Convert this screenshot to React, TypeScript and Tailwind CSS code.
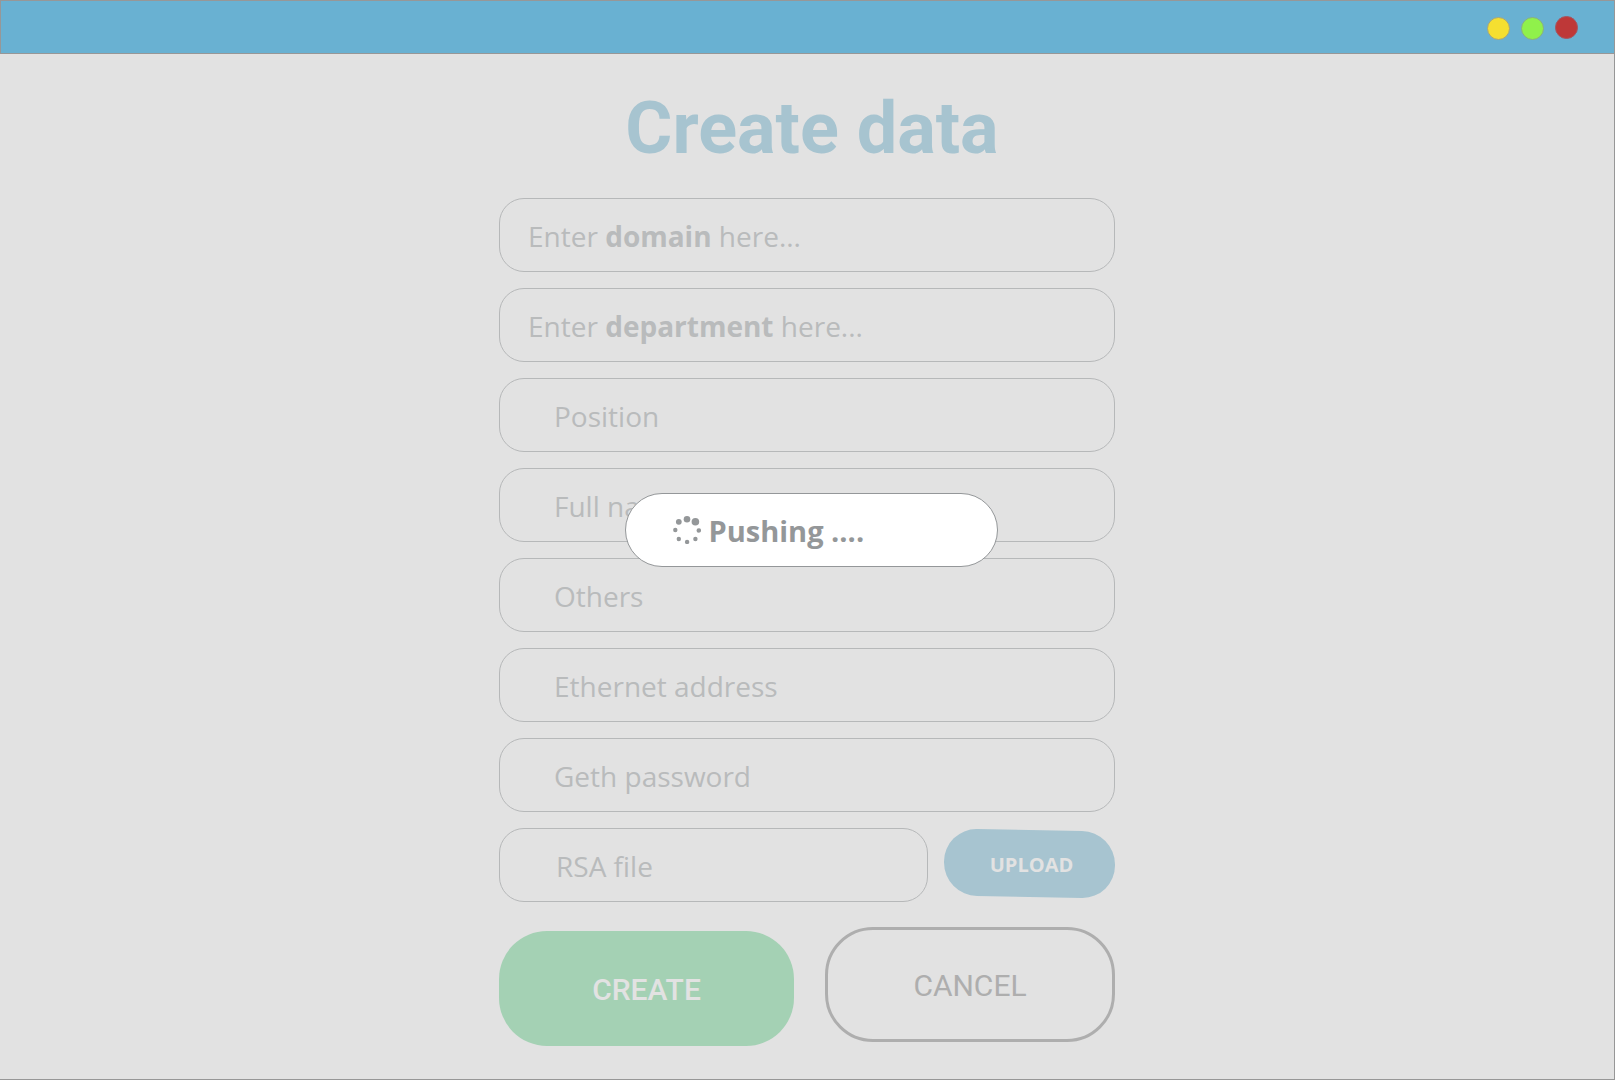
import { useState, type ReactNode } from "react";

type FieldProps = {
  id: string;
  hint: ReactNode;
  indent: string;
  type?: string;
  className?: string;
};

function Field({ id, hint, indent, type = "text", className = "" }: FieldProps) {
  const [value, setValue] = useState("");
  return (
    <div className={`relative h-[74px] ${className}`}>
      <input
        id={id}
        type={type}
        value={value}
        onChange={(e) => setValue(e.target.value)}
        className={`h-full w-full rounded-[25px] border border-[#b6b8b9] bg-transparent text-[28px] text-[#949799] outline-none ${indent}`}
      />
      <label
        htmlFor={id}
        className={`pointer-events-none absolute inset-0 flex items-center whitespace-pre pt-0.5 text-[28px] leading-[40px] text-[#b9bbbc] ${indent} ${value ? "opacity-0" : ""}`}
      >
        {hint}
      </label>
    </div>
  );
}

function Spinner() {
  return (
    <svg width="28" height="28" viewBox="0 0 28 28" fill="#949799" aria-hidden="true">
      <circle cx="14" cy="3.3" r="3.3" />
      <circle cx="22.4" cy="5.8" r="3.8" />
      <circle cx="25.8" cy="14.5" r="2.3" />
      <circle cx="22.4" cy="23" r="2.2" />
      <circle cx="14.1" cy="26" r="2.2" />
      <circle cx="5.8" cy="23" r="2.2" />
      <circle cx="2.3" cy="14" r="2.2" />
      <circle cx="5.8" cy="5.8" r="2.9" />
    </svg>
  );
}

export default function App() {
  return (
    <div className="relative flex min-h-screen flex-col border-r border-b border-[#979797] bg-[#e2e2e2] font-['Open_Sans','Noto_Sans',sans-serif]">
      <header className="-mr-px flex h-[54px] items-center justify-end gap-[11px] border border-[#979797] bg-[#69b1d2] pr-9">
        <button type="button" aria-label="Minimize" className="mt-0.5 size-[23px] rounded-full border border-[#a5a57c] bg-[#f5df30]" />
        <button type="button" aria-label="Maximize" className="mt-0.5 size-[23px] rounded-full border border-[#8aae82] bg-[#90f14b]" />
        <button type="button" aria-label="Close" className="size-[23px] rounded-full border border-[#a55560] bg-[#be3838]" />
      </header>

      <main className="mx-auto w-full max-w-[616px]">
        <h1 className="mt-[35px] pl-2.5 text-center font-['Roboto',sans-serif] text-[72px] leading-[80px] font-bold whitespace-nowrap text-[#a7c4d0]">
          Create data
        </h1>
        <form className="mt-[29px]" onSubmit={(e) => e.preventDefault()}>
          <div className="flex flex-col gap-4">
            <Field id="domain" indent="px-[29px]" hint={<>Enter <b>domain</b> here...</>} />
            <Field id="department" indent="px-[29px]" hint={<>Enter <b>department</b> here...</>} />
            <Field id="position" indent="px-[55px]" hint="Position" />
            <Field id="full-name" indent="px-[55px]" hint="Full name" />
            <Field id="others" indent="px-[55px]" hint="Others" />
            <Field id="ethernet" indent="px-[55px]" hint="Ethernet address" />
            <Field id="password" indent="px-[55px]" type="password" hint="Geth password" />
            <div className="flex items-center gap-4">
              <Field id="rsa" indent="px-[57px]" className="flex-1" hint="RSA file" />
              <button
                type="button"
                className="relative mb-1 h-[67px] w-[171px] pt-1 pl-1 text-[20px] leading-6 font-bold text-[#e2e2e2]"
              >
                <span className="absolute inset-0 skew-y-1 rounded-[33px] bg-[#a7c4d0]" />
                <span className="relative">UPLOAD</span>
              </button>
            </div>
          </div>
          <div className="mt-[25px] flex items-start gap-[31px] font-['Roboto',sans-serif] text-[30px] leading-9">
            <button type="submit" className="mt-1 h-[115px] w-[295px] rounded-[48px] bg-[#a4d1b4] pt-0.5 font-medium text-[#e2e2e2]">
              CREATE
            </button>
            <button type="button" className="h-[115px] flex-1 rounded-[48px] border-3 border-[#aeaeae] pt-0.5 text-[#aeaeae]">
              CANCEL
            </button>
          </div>
        </form>
      </main>

      <div className="pointer-events-none absolute inset-0 flex items-center justify-center pb-5 pl-2">
        <div
          role="status"
          className="flex h-[74px] w-[373px] items-center gap-2 rounded-full border border-[#949799] bg-white pl-[47px] text-[29px] leading-[40px] font-bold text-[#949799]"
        >
          <Spinner />
          <span className="pt-0.5">Pushing ....</span>
        </div>
      </div>
    </div>
  );
}
